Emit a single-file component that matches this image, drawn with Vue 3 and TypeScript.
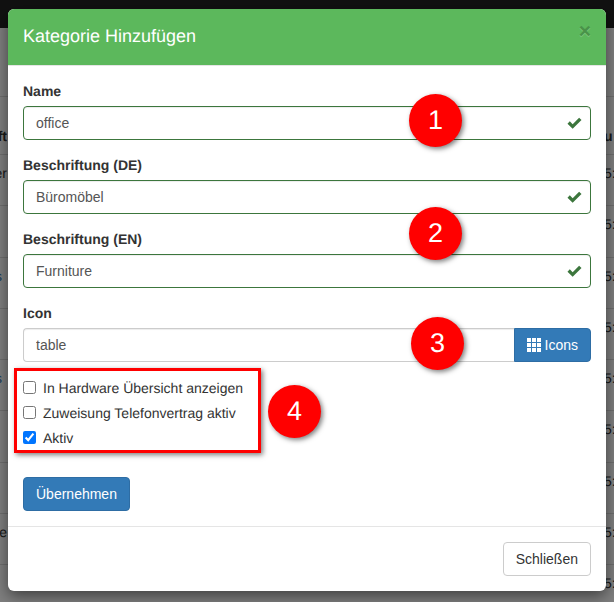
<template>
  <div class="page">
    <div class="navbar"></div>
    <div class="table-bg">
      <div class="spacer"></div>
      <div v-for="(row, i) in rows" :key="i" class="row" :class="{ head: i === 0 }">
        <span class="left" :class="{ link: row.link }">{{ row.left }}</span>
        <span class="right">{{ row.right }}</span>
      </div>
    </div>
    <div class="backdrop"></div>

    <div class="modal">
      <div class="modal-header">
        <h4>Kategorie Hinzufügen</h4>
        <span class="close">×</span>
      </div>
      <form class="modal-body" @submit.prevent>
        <div v-for="field in fields" :key="field.label" class="form-group">
          <label class="field-label">{{ field.label }}</label>
          <div class="input-wrap">
            <input class="input valid" :value="field.value" />
            <svg class="check" viewBox="0 0 16 13" width="15" height="12">
              <path d="M0.4 7.2 L2.9 4.7 L6 7.8 L13 0.8 L15.6 3.3 L6 12.8 Z" />
            </svg>
          </div>
        </div>
        <div class="form-group">
          <label class="field-label">Icon</label>
          <div class="input-group">
            <input class="input grouped" value="table" />
            <button type="button" class="btn btn-primary addon">
              <svg class="grid-icon" viewBox="0 0 14 14" width="14" height="14">
                <rect v-for="c in gridCells" :key="c.key" :x="c.x" :y="c.y" width="4" height="4" />
              </svg>
              Icons
            </button>
          </div>
        </div>
        <div class="checks">
          <label v-for="item in checks" :key="item.label" class="check-row">
            <input type="checkbox" :checked="item.on" />
            <span>{{ item.label }}</span>
          </label>
        </div>
        <button type="submit" class="btn btn-primary submit">Übernehmen</button>
      </form>
      <div class="modal-footer">
        <button type="button" class="btn btn-default">Schließen</button>
      </div>
    </div>

    <!-- annotations drawn over the screenshot -->
    <div class="highlight"></div>
    <div v-for="m in markers" :key="m.n" class="marker" :style="{ left: m.x + 'px', top: m.y + 'px' }">{{ m.n }}</div>
  </div>
</template>

<script setup lang="ts">
const rows = [
  { left: 'ft', right: 'u', link: false },
  { left: 'er', right: '5:4', link: false },
  { left: '', right: '5:4', link: false },
  { left: 's', right: '5:4', link: true },
  { left: '', right: '5:4', link: false },
  { left: 's', right: '5:4', link: true },
  { left: '', right: '5:4', link: false },
  { left: '', right: '5:4', link: false },
  { left: 'e', right: '5:4', link: false },
  { left: '', right: '5:4', link: false },
]

const fields = [
  { label: 'Name', value: 'office' },
  { label: 'Beschriftung (DE)', value: 'Büromöbel' },
  { label: 'Beschriftung (EN)', value: 'Furniture' },
]

const checks = [
  { label: 'In Hardware Übersicht anzeigen', on: false },
  { label: 'Zuweisung Telefonvertrag aktiv', on: false },
  { label: 'Aktiv', on: true },
]

const gridCells = [0, 1, 2].flatMap((r) =>
  [0, 1, 2].map((c) => ({ key: `${r}-${c}`, x: c * 5, y: r * 5 })),
)

const markers = [
  { n: 1, x: 409, y: 94 },
  { n: 2, x: 409, y: 207 },
  { n: 3, x: 411, y: 317 },
  { n: 4, x: 268, y: 385 },
]
</script>

<style>
html,
body {
  margin: 0;
  overflow: hidden;
}
</style>

<style scoped>
.page {
  position: relative;
  width: 614px;
  height: 602px;
  overflow: hidden;
  background: #fff;
  font-family: "Liberation Sans", Arial, sans-serif;
  font-size: 14px;
  color: #333;
  text-rendering: geometricPrecision;
}

.navbar {
  height: 28px;
  background: #222;
}

.spacer {
  height: 69px;
  border-bottom: 1px solid #ddd;
  box-sizing: border-box;
}

.row {
  display: flex;
  justify-content: space-between;
  height: 51.25px;
  padding-top: 8px;
  box-sizing: border-box;
  border-bottom: 1px solid #ddd;
  line-height: 20px;
  white-space: nowrap;
}

.row.head {
  height: 58px;
  padding-top: 29px;
  font-weight: 700;
}

.left {
  display: flex;
  justify-content: flex-end;
  width: 7px;
  overflow: hidden;
}

.left.link {
  width: 2px;
  color: #337ab7;
}

.right {
  width: 10px;
  overflow: hidden;
}

.backdrop {
  position: absolute;
  inset: 0;
  background: rgba(0, 0, 0, 0.5);
}

.modal {
  position: absolute;
  left: 8px;
  top: 9px;
  width: 598px;
  height: 582px;
  display: flex;
  flex-direction: column;
  background: #fff;
  border-radius: 6px;
  overflow: hidden;
  box-shadow: 0 5px 15px rgba(0, 0, 0, 0.5);
}

.modal-header {
  display: flex;
  justify-content: space-between;
  flex: none;
  height: 57px;
  padding: 15px 15px 0;
  box-sizing: border-box;
  background: #5cb85c;
  border-bottom: 1px solid #e5e5e5;
}

.modal-header h4 {
  margin: 0;
  font-size: 18px;
  font-weight: 500;
  line-height: 25px;
  color: #fff;
}

.close {
  margin-top: -2px;
  font-size: 21px;
  font-weight: 700;
  line-height: 19px;
  color: #000;
  opacity: 0.2;
  text-shadow: 0 1px 0 #fff;
}

.modal-body {
  flex: 1;
  padding: 15px;
}

.form-group {
  margin-bottom: 15px;
}

.field-label {
  display: block;
  margin-bottom: 5px;
  font-weight: 700;
  line-height: 20px;
}

.input-wrap {
  position: relative;
}

.input {
  display: block;
  width: 100%;
  height: 34px;
  padding: 6px 12px;
  box-sizing: border-box;
  font: inherit;
  line-height: 20px;
  color: #555;
  background: #fff;
  border: 1px solid #ccc;
  border-radius: 4px;
  box-shadow: inset 0 1px 1px rgba(0, 0, 0, 0.075);
  outline: none;
}

.input.valid {
  border-color: #3c763d;
}

.check {
  position: absolute;
  right: 9px;
  top: 11px;
  fill: #3c763d;
}

.input-group {
  display: flex;
}

.input.grouped {
  flex: 1;
  min-width: 0;
  border-right: 0;
  border-radius: 4px 0 0 4px;
}

.btn {
  display: inline-block;
  height: 34px;
  padding: 6px 12px;
  box-sizing: border-box;
  font: inherit;
  line-height: 20px;
  white-space: nowrap;
  border: 1px solid transparent;
  border-radius: 4px;
}

.btn-primary {
  color: #fff;
  background: #337ab7;
  border-color: #2e6da4;
}

.btn-default {
  color: #333;
  background: #fff;
  border-color: #ccc;
}

.addon {
  flex: none;
  border-radius: 0 4px 4px 0;
}

.grid-icon {
  fill: #fff;
  vertical-align: -2px;
}

.checks {
  display: flex;
  flex-direction: column;
  margin-top: -2px;
  margin-bottom: 27px;
}

.check-row {
  display: flex;
  align-items: center;
  height: 25px;
}

.check-row input {
  width: 13px;
  height: 13px;
  margin: 0 7px 0 0;
}

.submit {
  display: block;
}

.modal-footer {
  display: flex;
  justify-content: flex-end;
  flex: none;
  padding: 15px;
  border-top: 1px solid #e5e5e5;
}

.highlight {
  position: absolute;
  left: 14px;
  top: 368px;
  width: 247px;
  height: 85px;
  box-sizing: border-box;
  border: 3px solid #f00;
  box-shadow: 2px 2px 5px rgba(0, 0, 0, 0.5);
  pointer-events: none;
}

.marker {
  position: absolute;
  width: 53px;
  height: 53px;
  border-radius: 50%;
  background: #f00;
  color: #fff;
  font-size: 27px;
  line-height: 53px;
  text-align: center;
  box-shadow: 2px 2px 5px rgba(0, 0, 0, 0.5);
}
</style>
